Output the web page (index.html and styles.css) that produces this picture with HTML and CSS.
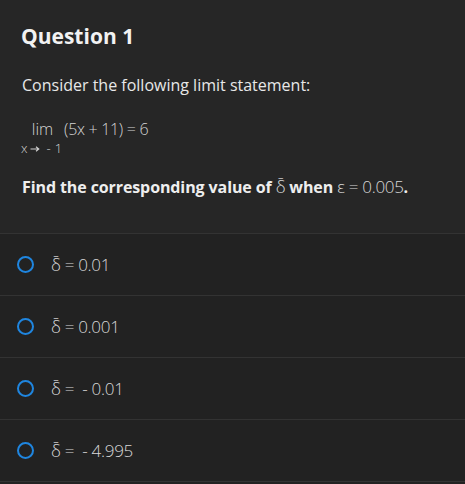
FILE: index.html
```html
<!DOCTYPE html>
<html>
<head>
<meta charset="utf-8">
<link rel="stylesheet" href="styles.css">
</head>
<body>
<div class="page">
  <section class="question">
    <h1 class="title">Question 1</h1>
    <p class="lead">Consider the following limit statement:</p>
    <div class="limit">
      <div class="lim-col">
        <span class="lim">lim</span>
        <span class="under">x<svg class="arrow" width="10" height="8" viewBox="0 0 10 8"><path d="M0.5 4H8.5M6 1.8L8.8 4L6 6.2" fill="none" stroke="#cfcfcf" stroke-width="1.1"/></svg><span class="neg">-</span>1</span>
      </div>
      <span class="expr">(5<i>x</i> + 11) = 6</span>
    </div>
    <p class="ask">Find the corresponding value of <span class="math"><i>δ̄</i></span> when <span class="math"><i>ε</i> = 0.005</span>.</p>
  </section>
  <ul class="options">
    <li class="option"><span class="radio"></span><span class="math"><i>δ̄</i> = 0.01</span></li>
    <li class="option"><span class="radio"></span><span class="math"><i>δ̄</i> = 0.001</span></li>
    <li class="option"><span class="radio"></span><span class="math"><i>δ̄</i> = &nbsp;- 0.01</span></li>
    <li class="option"><span class="radio"></span><span class="math"><i>δ̄</i> = &nbsp;- 4.995</span></li>
  </ul>
</div>
</body>
</html>
```
FILE: styles.css
```css
html, body {
  margin: 0;
  padding: 0;
  background: #222222;
}
.page {
  width: 465px;
  height: 484px;
  background: #222222;
  font-family: "Open Sans", sans-serif;
  color: #e6e6e6;
  overflow: hidden;
}
.question {
  background: #262626;
  padding: 23px 21px 0 21px;
  height: 210px;
  border-bottom: 1px solid #333333;
}
.title {
  margin: 0;
  font-size: 21px;
  font-weight: 700;
  color: #f2f2f2;
  line-height: 26px;
}
.lead {
  margin: 26px 0 0 1px;
  font-size: 16px;
  line-height: 20px;
  color: #e8e8e8;
}
.limit {
  display: flex;
  align-items: flex-start;
  margin-top: 25px;
  font-weight: 300;
  color: #d4d4d4;
}
.lim-col {
  display: flex;
  flex-direction: column;
  align-items: center;
}
.lim {
  font-size: 16px;
  line-height: 19px;
  padding-left: 2px;
}
.under {
  font-size: 13px;
  line-height: 15px;
  margin-top: 2px;
  display: flex;
  align-items: center;
}
.arrow {
  margin: 0 6px 0 3px;
}
.neg {
  margin-right: 4px;
}
.expr {
  font-size: 16px;
  line-height: 19px;
  margin-left: 2px;
  letter-spacing: -0.3px;
}
.expr i, .math i {
  font-style: normal;
}
.ask {
  margin: 21px 0 0 1px;
  font-size: 16px;
  font-weight: 700;
  color: #eeeeee;
  line-height: 20px;
  letter-spacing: -0.1px;
}
.math {
  font-weight: 300;
  font-size: 17px;
  color: #d8d8d8;
  letter-spacing: -0.3px;
}
.options {
  list-style: none;
  margin: 0;
  padding: 0;
}
.option {
  display: flex;
  align-items: center;
  height: 61px;
  border-bottom: 1px solid #333333;
  padding-left: 17px;
}
.radio {
  width: 13px;
  height: 13px;
  border: 2px solid #1f86e0;
  border-radius: 50%;
  margin-right: 17px;
  flex: none;
}
```
